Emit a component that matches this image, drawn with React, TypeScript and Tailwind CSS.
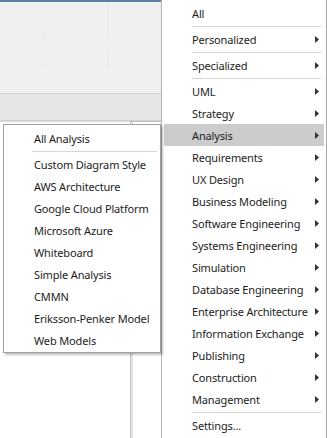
const mainItems: (string | null)[] = [
  'All',
  null,
  'Personalized>',
  null,
  'Specialized>',
  null,
  'UML>',
  'Strategy>',
  'Analysis>',
  'Requirements>',
  'UX Design>',
  'Business Modeling>',
  'Software Engineering>',
  'Systems Engineering>',
  'Simulation>',
  'Database Engineering>',
  'Enterprise Architecture>',
  'Information Exchange>',
  'Publishing>',
  'Construction>',
  'Management>',
  null,
  'Settings...',
];

const subItems: (string | null)[] = [
  'All Analysis',
  null,
  'Custom Diagram Style',
  'AWS Architecture',
  'Google Cloud Platform',
  'Microsoft Azure',
  'Whiteboard',
  'Simple Analysis',
  'CMMN',
  'Eriksson-Penker Model',
  'Web Models',
];

const font = { fontFamily: '"Noto Sans", "Open Sans", sans-serif' };

function Arrow() {
  return (
    <svg width="4" height="7" viewBox="0 0 4 7" className="block">
      <polygon points="0,0 4,3.5 0,7" fill="#333333" />
    </svg>
  );
}

function Sep({ left, right }: { left: string; right: string }) {
  return (
    <div className={`h-[4px] flex items-center ${left} ${right}`}>
      <div className="h-px w-full bg-[#d7d7d7]" />
    </div>
  );
}

function MainMenu() {
  return (
    <div className="w-[165px] h-[438px] bg-white border-r border-[#a5a5a5] px-[2px] pt-[2px]">
      {mainItems.map((it, i) => {
        if (it === null) return <Sep key={i} left="ml-[28px]" right="mr-[3px]" />;
        const sub = it.endsWith('>');
        const label = sub ? it.slice(0, -1) : it;
        const active = label === 'Analysis';
        return (
          <div
            key={i}
            className={`h-[22px] flex items-center pl-[28px] pr-[5px] ${active ? 'bg-[#cccccc]' : ''}`}
          >
            <span className="flex-1 text-[11px] tracking-[-0.15px] leading-none text-[#1c1c1c] whitespace-nowrap">{label}</span>
            {sub && <Arrow />}
          </div>
        );
      })}
    </div>
  );
}

function SubMenu() {
  return (
    <div className="absolute left-[3px] top-[124px] w-[158px] bg-white border border-[#a0a0a0] pt-[2px] pb-px px-[2px] shadow-[2px_2px_2px_rgba(0,0,0,0.25)]">
      {subItems.map((it, i) =>
        it === null ? (
          <Sep key={i} left="ml-[26px]" right="mr-px" />
        ) : (
          <div key={i} className="h-[22px] flex items-center pl-[28px]">
            <span className="text-[11px] tracking-[-0.15px] leading-none text-[#1c1c1c] whitespace-nowrap">{it}</span>
          </div>
        )
      )}
    </div>
  );
}

function BackPanel() {
  return (
    <div className="w-[162px] h-[438px] border-r border-[#b4b4b4] flex flex-col">
      <div className="h-[2px] bg-[#5b7fa9]" />
      {/* toolbar area */}
      <div className="h-[92px] bg-[#f0f0f0] border-b border-[#d2d2d2] flex flex-col">
        <div className="mt-[3px] h-[33px] flex">
          <div className="w-[42px]" />
          <div className="w-px bg-[#e9e9e9]" />
          <div className="w-[64px]" />
          <div className="w-px bg-[#e9e9e9]" />
        </div>
        <div className="mt-[15px] h-[15px] flex">
          <div className="w-[42px]" />
          <div className="w-px bg-[#e9e9e9]" />
          <div className="w-[64px]" />
          <div className="w-px bg-[#e9e9e9]" />
        </div>
      </div>
      <div className="h-[27px] bg-[#e6e6e6] border-b border-[#d0d0d0]" />
      <div className="h-px flex">
        <div className="w-[130px] bg-[#dadada]" />
        <div className="flex-1 bg-[#bdbdbd]" />
      </div>
      <div className="flex-1 bg-white flex">
        <div className="w-[130px]" />
        <div className="w-[3px] bg-[#e2e2e2] border-l border-[#cacaca]" />
      </div>
    </div>
  );
}

export default function App() {
  return (
    <div className="relative w-[327px] h-[438px] overflow-hidden bg-white flex antialiased" style={font}>
      <BackPanel />
      <MainMenu />
      <SubMenu />
    </div>
  );
}
